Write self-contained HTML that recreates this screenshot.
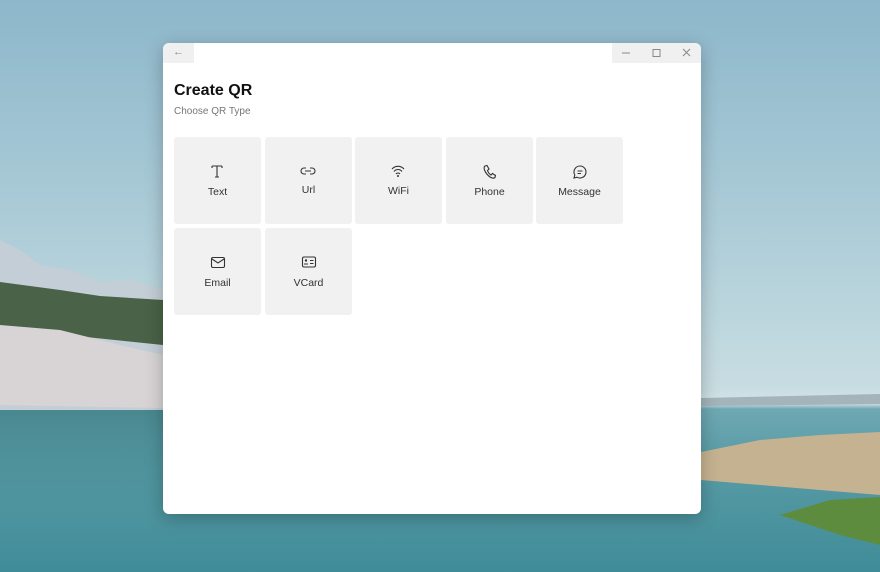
<!DOCTYPE html>
<html><head><meta charset="utf-8"><style>
*{margin:0;padding:0;box-sizing:border-box}
body{width:880px;height:572px;overflow:hidden;position:relative;font-family:"Segoe UI","Liberation Sans",sans-serif;
background:linear-gradient(180deg,#8db7cb 0%,#a9cad6 35%,#c8dde2 68%,#d6e4e6 70.5%,#6fa8b3 71.5%,#5a9ca6 80%,#3f8c98 100%);}
.win{position:absolute;left:163px;top:43px;width:538px;height:471px;background:#fff;border-radius:6px;box-shadow:0 4px 18px rgba(0,0,0,.25);overflow:hidden}
.back{position:absolute;left:0;top:0;width:31px;height:20px;background:#f0f0f0;color:#888;font-size:11px;text-align:center;line-height:19px}
.ctl{position:absolute;right:0;top:0;width:89px;height:20px;background:#f0f0f0}
h1{position:absolute;left:11px;top:39px;font-size:16px;font-weight:bold;color:#111}
.sub{position:absolute;left:11px;top:63px;font-size:10px;color:#777}
.t{position:absolute;width:87px;height:87px;background:#f1f1f1;border-radius:3px;text-align:center;font-size:10.5px;color:#333}
.t svg{position:absolute;left:36px;top:27px}
.t span{position:absolute;left:0;right:0;top:49px}
</style></head><body>
<svg style="position:absolute;left:0;top:0" width="880" height="572">
<defs><linearGradient id="w" x1="0" y1="0" x2="0" y2="1"><stop offset="0" stop-color="#3f7f86"/><stop offset="1" stop-color="#4a939c" stop-opacity="0"/></linearGradient></defs>
<path d="M0 240 L20 250 L40 265 L70 270 L100 282 L130 280 L163 290 L163 410 L0 410Z" fill="#c3ced6"/>
<path d="M0 282 L30 286 L60 290 L100 296 L163 300 L163 345 L0 328Z" fill="#4a6248"/>
<path d="M0 325 L60 330 L120 345 L163 355 L163 408 L0 405Z" fill="#d8d4d6"/>
<path d="M0 410 L163 410 L163 540 L0 540Z" fill="url(#w)" opacity=".8"/>
<path d="M701 398 L880 394 L880 404 L701 406Z" fill="#a4b4ba"/>
<path d="M701 452 L760 440 L820 435 L880 432 L880 495 L701 480Z" fill="#c5b291"/>
<path d="M780 515 L830 500 L880 497 L880 545 L840 535Z" fill="#5e8c3e"/>
</svg>
<div class="win">
<div class="back">←</div>
<div class="ctl">
<svg width="89" height="20"><line x1="10" y1="10" x2="18" y2="10" stroke="#888"/><rect x="41" y="6.5" width="7" height="7" fill="none" stroke="#888"/><path d="M71 6 L78 13 M78 6 L71 13" stroke="#888"/></svg>
</div>
<h1>Create QR</h1>
<div class="sub">Choose QR Type</div>
<div class="t" style="left:11px;top:94px"><svg width="14" height="14"><path d="M2 2 H12 M2 2 V4 M12 2 V4 M7 2 V13 M5 13 H9" stroke="#333" fill="none" stroke-width="1.1"/></svg><span>Text</span></div>
<div class="t" style="left:102px;top:94px"><svg width="16" height="14" style="left:35px"><path d="M6 4 H4 A3 3 0 0 0 4 10 H6 M10 4 H12 A3 3 0 0 1 12 10 H10 M5 7 H11" stroke="#333" fill="none" stroke-width="1.1"/></svg><span style="top:47px">Url</span></div>
<div class="t" style="left:192px;top:94px"><svg width="16" height="14" style="left:35px"><path d="M2 5 A8 8 0 0 1 14 5 M4 7.5 A5 5 0 0 1 12 7.5 M6 10 A2.5 2.5 0 0 1 10 10" stroke="#333" fill="none" stroke-width="1.1"/><circle cx="8" cy="12" r="1" fill="#333"/></svg><span style="top:48px">WiFi</span></div>
<div class="t" style="left:283px;top:94px"><svg width="14" height="16"><path d="M3 2 L5 1.5 L7 5 L5.5 6.5 Q6.5 9.5 9 11 L10.5 9.5 L13.5 11.5 L13 13.5 Q11 15 8 13 Q4 10 2.5 6 Q1.5 3 3 2Z" stroke="#333" fill="none" stroke-width="1.1"/></svg><span>Phone</span></div>
<div class="t" style="left:373px;top:94px"><svg width="16" height="16" style="left:36px"><path d="M8 2 A6 6 0 1 1 5 13.2 L2 14 L2.8 11 A6 6 0 0 1 8 2Z M5.5 7 H10.5 M5.5 9.5 H9" stroke="#333" fill="none" stroke-width="1.1"/></svg><span>Message</span></div>
<div class="t" style="left:11px;top:185px"><svg width="16" height="14" style="left:36px"><rect x="1.5" y="2.5" width="13" height="10" rx="1.5" stroke="#333" fill="none" stroke-width="1.1"/><path d="M2 4 L8 8 L14 4" stroke="#333" fill="none" stroke-width="1.1"/></svg><span>Email</span></div>
<div class="t" style="left:102px;top:185px"><svg width="16" height="14" style="left:36px"><rect x="1.5" y="2" width="13" height="10" rx="1.5" stroke="#333" fill="none" stroke-width="1.1"/><circle cx="5" cy="5.5" r="1.2" fill="#333"/><path d="M3 9 H7 M9 5.5 H12.5 M9 8.5 H12.5" stroke="#333" stroke-width="1.1"/></svg><span>VCard</span></div>
</div>
</body></html>
